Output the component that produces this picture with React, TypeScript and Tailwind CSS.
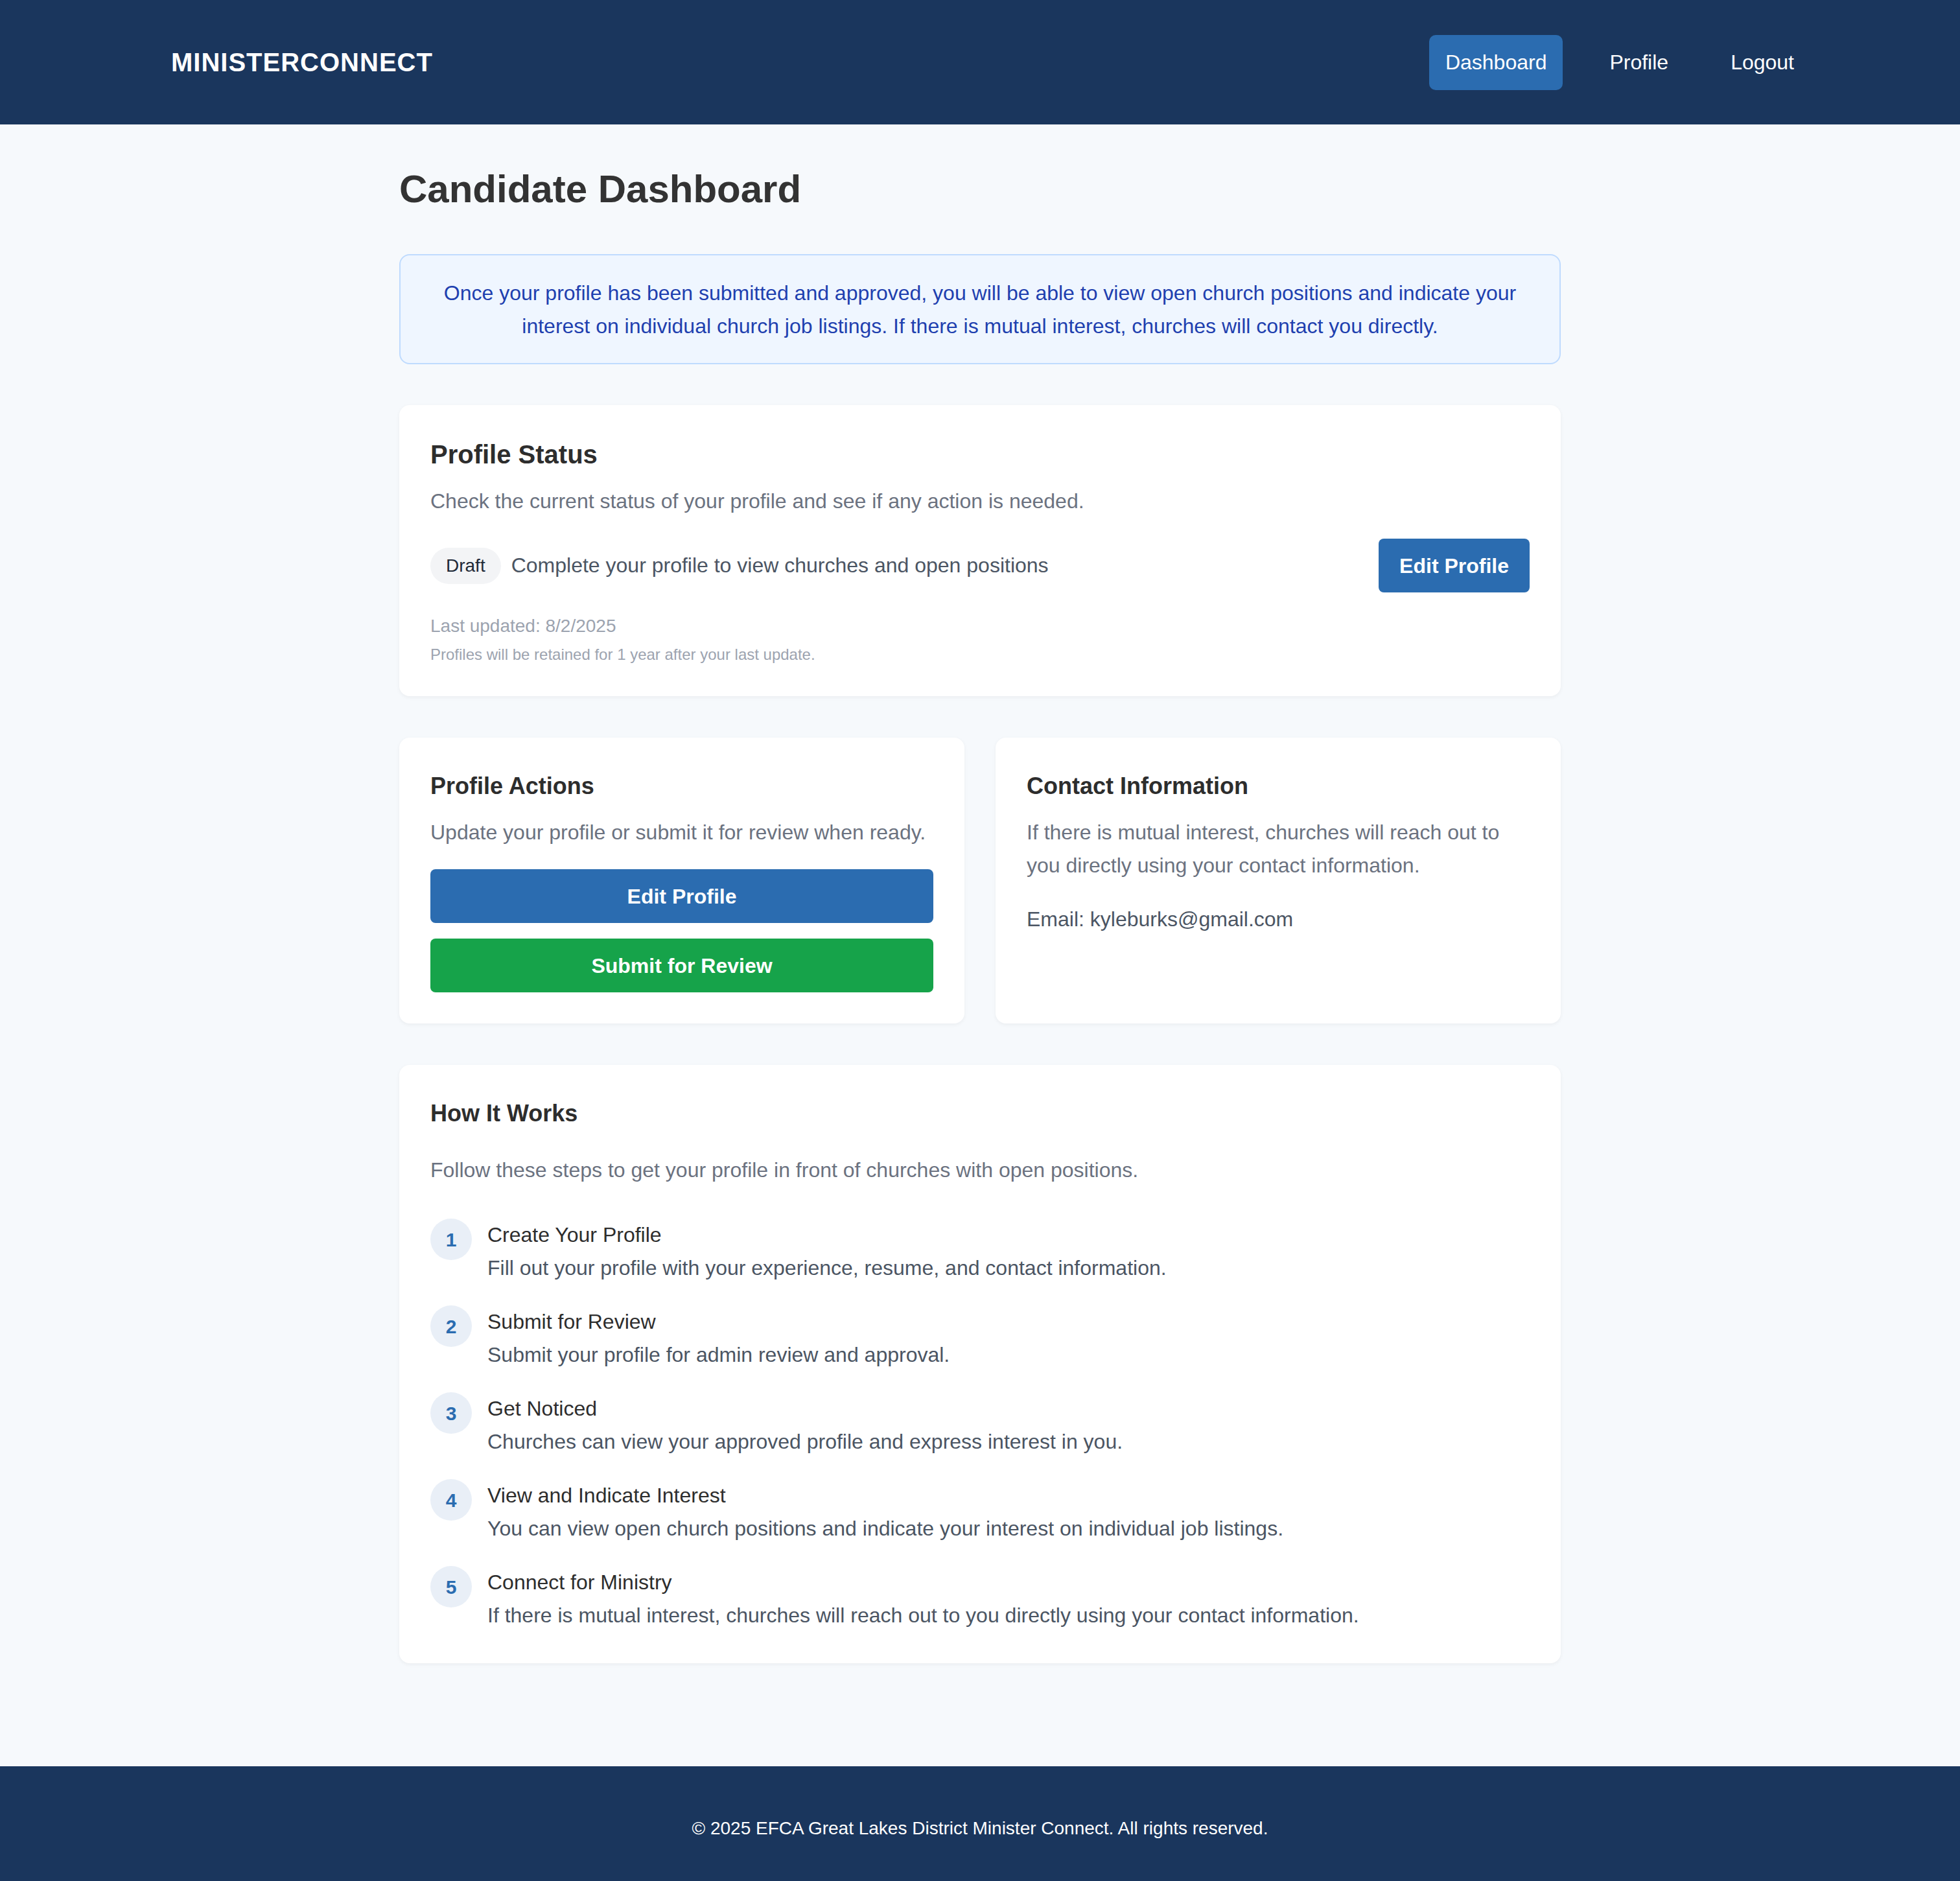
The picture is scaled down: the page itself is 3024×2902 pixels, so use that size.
const steps = [
  {
    title: 'Create Your Profile',
    text: 'Fill out your profile with your experience, resume, and contact information.',
  },
  { title: 'Submit for Review', text: 'Submit your profile for admin review and approval.' },
  { title: 'Get Noticed', text: 'Churches can view your approved profile and express interest in you.' },
  {
    title: 'View and Indicate Interest',
    text: 'You can view open church positions and indicate your interest on individual job listings.',
  },
  {
    title: 'Connect for Ministry',
    text: 'If there is mutual interest, churches will reach out to you directly using your contact information.',
  },
];

const Header = () => (
  <header className="w-full bg-[#1a365d] h-[192px] flex items-center justify-between pl-[264px] pr-[232px]">
    <div className="text-white text-[40px] font-bold tracking-[1px] leading-[48px]">MINISTERCONNECT</div>
    <nav className="flex items-center gap-[48px] text-white text-[32px]">
      <a className="h-[85px] px-[25px] flex items-center rounded-[10px] bg-[#2b6cb0]">Dashboard</a>
      <a className="h-[85px] px-[24px] flex items-center">Profile</a>
      <a className="h-[85px] px-[24px] flex items-center">Logout</a>
    </nav>
  </header>
);

const Card = ({ children, className = '' }: { children: React.ReactNode; className?: string }) => (
  <div className={`bg-white rounded-[16px] p-[48px] shadow-[0_2px_6px_rgba(0,0,0,0.05)] ${className}`}>
    {children}
  </div>
);

const ProfileStatus = () => (
  <Card>
    <h2 className="text-[40px] font-bold text-[#2d2d2d] leading-[56px]">Profile Status</h2>
    <p className="mt-[19px] text-[32px] leading-[51px] text-[#6b7280]">
      Check the current status of your profile and see if any action is needed.
    </p>
    <div className="mt-[32px] flex items-center justify-between">
      <div className="flex items-center gap-[16px]">
        <span className="px-[24px] py-[8px] text-[28px] leading-[40px] rounded-full bg-[#f3f4f6] text-[#1f2937]">
          Draft
        </span>
        <span className="text-[32px] leading-[51px] text-[#4b5563]">
          Complete your profile to view churches and open positions
        </span>
      </div>
      <button className="h-[83px] px-[32px] rounded-[8px] bg-[#2b6cb0] text-white text-[32px] font-bold">
        Edit Profile
      </button>
    </div>
    <p className="mt-[32px] text-[28px] leading-[40px] text-[#9ca3af]">Last updated: 8/2/2025</p>
    <p className="mt-[8px] text-[24px] leading-[32px] text-[#9ca3af]">
      Profiles will be retained for 1 year after your last update.
    </p>
  </Card>
);

const ProfileActions = () => (
  <Card>
    <h3 className="text-[36px] font-bold text-[#2d2d2d] leading-[54px]">Profile Actions</h3>
    <p className="mt-[19px] text-[32px] leading-[51px] text-[#6b7280]">
      Update your profile or submit it for review when ready.
    </p>
    <div className="mt-[31px] flex flex-col gap-[24px]">
      <button className="h-[83px] w-full rounded-[8px] bg-[#2b6cb0] text-white text-[32px] font-bold">
        Edit Profile
      </button>
      <button className="h-[83px] w-full rounded-[8px] bg-[#16a34a] text-white text-[32px] font-bold">
        Submit for Review
      </button>
    </div>
  </Card>
);

const ContactInfo = () => (
  <Card>
    <h3 className="text-[36px] font-bold text-[#2d2d2d] leading-[54px]">Contact Information</h3>
    <p className="mt-[19px] text-[32px] leading-[51px] text-[#6b7280]">
      If there is mutual interest, churches will reach out to you directly using your contact information.
    </p>
    <p className="mt-[32px] text-[32px] leading-[51px] text-[#4b5563]">Email: kyleburks@gmail.com</p>
  </Card>
);

const HowItWorks = () => (
  <Card>
    <h3 className="text-[36px] font-bold text-[#2d2d2d] leading-[54px]">How It Works</h3>
    <p className="mt-[35px] text-[32px] leading-[51px] text-[#6b7280]">
      Follow these steps to get your profile in front of churches with open positions.
    </p>
    <ol className="mt-[49px] flex flex-col gap-[32px]">
      {steps.map((step, i) => (
        <li key={step.title} className="flex items-start gap-[24px]">
          <span className="w-[64px] h-[64px] shrink-0 rounded-full bg-[#e9eff7] text-[#2b6cb0] text-[30px] font-bold flex items-center justify-center">
            {i + 1}
          </span>
          <div className="text-[32px] leading-[51px]">
            <div className="text-[#2d2d2d]">{step.title}</div>
            <div className="text-[#4b5563]">{step.text}</div>
          </div>
        </li>
      ))}
    </ol>
  </Card>
);

export default function App() {
  return (
    <div
      className="min-h-screen flex flex-col bg-[#f6f9fc]"
      style={{ fontFamily: '"Liberation Sans", Arial, Helvetica, sans-serif' }}
    >
      <Header />
      <main className="flex-1 w-full pt-[64px] pb-[64px]">
        <div className="w-[1792px] mx-auto">
          <h1 className="text-[60px] font-bold text-[#333333] leading-[72px]">Candidate Dashboard</h1>
          <div className="mt-[64px] rounded-[16px] border-2 border-[#bfdbfe] bg-[#eff6ff] px-[32px] pt-[33px] pb-[31px] text-center text-[32px] leading-[51px] text-[#1e40af]">
            Once your profile has been submitted and approved, you will be able to view open church positions and
            indicate your interest on individual church job listings. If there is mutual interest, churches will
            contact you directly.
          </div>
          <div className="mt-[63px]">
            <ProfileStatus />
          </div>
          <div className="mt-[64px] grid grid-cols-2 gap-[48px]">
            <ProfileActions />
            <ContactInfo />
          </div>
          <div className="mt-[64px]">
            <HowItWorks />
          </div>
        </div>
      </main>
      <footer className="w-full bg-[#1a365d] h-[177px] flex items-center justify-center pt-[14px] text-white text-[28px] leading-[45px]">
        © 2025 EFCA Great Lakes District Minister Connect. All rights reserved.
      </footer>
    </div>
  );
}
